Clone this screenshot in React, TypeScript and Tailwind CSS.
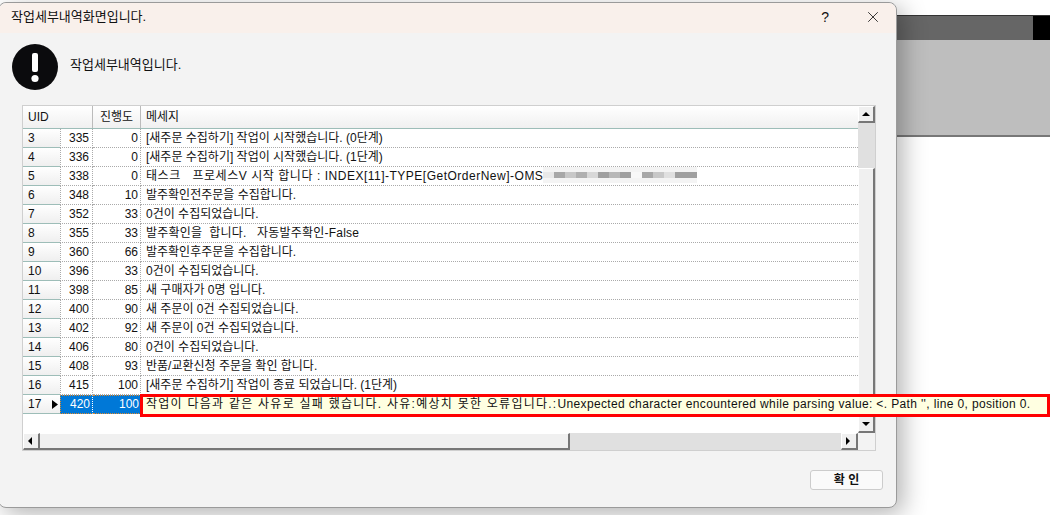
import React from 'react';
import { X } from 'lucide-react';

const rows = [
  ['3', '335', '0', '[새주문 수집하기] 작업이 시작했습니다. (0단계)'],
  ['4', '336', '0', '[새주문 수집하기] 작업이 시작했습니다. (1단계)'],
  ['5', '338', '0', '태스크   프로세스V 시작 합니다 : '],
  ['6', '348', '10', '발주확인전주문을 수집합니다.'],
  ['7', '352', '33', '0건이 수집되었습니다.'],
  ['8', '355', '33', '발주확인을  합니다.   자동발주확인-False'],
  ['9', '360', '66', '발주확인후주문을 수집합니다.'],
  ['10', '396', '33', '0건이 수집되었습니다.'],
  ['11', '398', '85', '새 구매자가 0명 입니다.'],
  ['12', '400', '90', '새 주문이 0건 수집되었습니다.'],
  ['13', '402', '92', '새 주문이 0건 수집되었습니다.'],
  ['14', '406', '80', '0건이 수집되었습니다.'],
  ['15', '408', '93', '반품/교환신청 주문을 확인 합니다.'],
  ['16', '415', '100', '[새주문 수집하기] 작업이 종료 되었습니다. (1단계)'],
];

const blur = ['#e8e8e8', '#a8a8a8', '#c8c8c8', '#b0b0b0', '#d8d8d8', '#a0a0a0', '#b8b8b8', '#a0a0a0', '#f8f8f8', '#a8a8a8', '#c8c8c8', '#e0e0e0', '#a0a0a0', '#a0a0a0'];

const ScrollBtn = ({ dir }: { dir: 'up' | 'down' | 'left' | 'right' }) => {
  const points = { up: '1,6 5,2 9,6', down: '1,2 5,6 9,2', left: '6,0 2,4 6,8', right: '2,0 6,4 2,8' }[dir];
  return (
    <div className="w-[17px] h-[17px] shrink-0 bg-[#f0f0f0] border-r-2 border-b-2 border-r-[#777] border-b-[#777] border-t border-l border-t-white border-l-white flex items-center justify-center">
      <svg width="10" height="8" viewBox="0 0 10 8"><polygon points={points} fill="#000" /></svg>
    </div>
  );
};

export default function App() {
  return (
    <div className="relative w-[1050px] h-[515px] overflow-hidden bg-white" style={{ fontFamily: '"Liberation Sans", "Noto Sans CJK KR", sans-serif' }}>
      {/* app behind the dialog */}
      <div className="pt-[15px]">
        <div className="h-[25px] flex justify-end bg-[#666] border-t border-[#333]">
          <div className="w-[17px] bg-black" />
        </div>
        <div className="h-[97px] bg-[#bebebe] border-b-2 border-[#777]" />
      </div>

      {/* dialog */}
      <div className="absolute left-[-2px] top-[2px] w-[899px] h-[506px] rounded-lg bg-[#f3f3f3] border border-[#9a9a9a] flex flex-col shadow-[6px_6px_24px_rgba(0,0,0,0.3)]">
        <div className="h-[30px] shrink-0 rounded-t-lg bg-[#f9f0eb] flex items-center pl-[12px] pb-[2px] text-[13px] text-[#111]">
          <span>작업세부내역화면입니다.</span>
          <span className="ml-auto mr-[35px] text-[14px]">?</span>
          <X size={18} strokeWidth={1.1} className="mr-[14px]" />
        </div>

        <div className="flex items-center h-[67px] shrink-0 pl-[13px] gap-[12px] text-[13px] text-[#111]">
          <svg width="46" height="46" viewBox="0 0 46 46">
            <circle cx="23" cy="23" r="23" fill="#0b0b0d" />
            <rect x="20" y="9" width="6" height="19" rx="2" fill="#fff" />
            <circle cx="23" cy="34.5" r="3.6" fill="#fff" />
          </svg>
          <span className="-mt-[3px]">작업세부내역입니다.</span>
        </div>

        {/* grid */}
        <div className="relative ml-[23px] mt-[5px] w-[854px] h-[346px] shrink-0 bg-white border border-[#cfcfcf] flex flex-col text-[12px] text-[#111]">
          <div className="flex flex-1 min-h-0">
            <div className="flex-1 min-w-0 flex flex-col">
              <div className="flex h-[23px] shrink-0 bg-gradient-to-b from-white to-[#f0f0f0] border-b border-[#9dbdb8]">
                <div className="w-[70px] pl-[5px] leading-[22px] border-r border-[#bbb]">UID</div>
                <div className="w-[48px] text-center leading-[22px] border-r border-[#bbb]">진행도</div>
                <div className="flex-1 pl-[5px] leading-[22px]">메세지</div>
              </div>
              {rows.map((r) => (
                <div key={r[0]} className="flex h-[19px] shrink-0 leading-[18px]">
                  <div className="w-[37px] pl-[5px] bg-gradient-to-b from-white to-[#efefef] border-b border-[#9dbdb8]">{r[0]}</div>
                  <div className="w-[33px] pr-[3px] text-right border-b border-l border-r border-dotted border-[#aaa]">{r[1]}</div>
                  <div className="w-[48px] pr-[2px] text-right border-b border-r border-dotted border-[#aaa]">{r[2]}</div>
                  <div className="flex-1 pl-[5px] border-b border-dotted border-[#aaa] flex whitespace-pre">
                    <span className={r[0] === '5' ? 'tracking-[0.55px]' : r[0] === '8' ? 'tracking-[0.2px]' : ''}>{r[3]}</span>
                    {r[0] === '5' && (
                      <>
                        <span className="tracking-[0.5px]">INDEX[11]-TYPE[GetOrderNew]-OMS</span>
                        <span className="flex items-center h-[16px] bg-[#f4f4f4]">
                          {blur.map((c, i) => (
                            <span key={i} className="w-[11px] h-[6px]" style={{ backgroundColor: c }} />
                          ))}
                        </span>
                      </>
                    )}
                  </div>
                </div>
              ))}
              <div className="flex h-[19px] shrink-0 leading-[17px]">
                <div className="w-[37px] pl-[5px] bg-gradient-to-b from-white to-[#efefef] border-b border-[#9dbdb8] flex items-center justify-between pr-[2px]">
                  <span>17</span>
                  <svg width="6" height="9" viewBox="0 0 6 9"><polygon points="0,0 6,4.5 0,9" fill="#000" /></svg>
                </div>
                <div className="w-[33px] pr-[2px] text-right bg-[#0078d7] text-white border-y border-l border-r border-dotted border-y-[#e08a2c] border-l-[#e08a2c] border-r-white">420</div>
                <div className="w-[48px] pr-[2px] text-right bg-[#0078d7] text-white border-y border-dotted border-[#e08a2c]">100</div>
              </div>
            </div>
            <div className="w-[17px] shrink-0 flex flex-col bg-[#e0e0e0]">
              <ScrollBtn dir="up" />
              <div className="h-[45px] shrink-0" />
              <div className="flex-1 bg-[#f0f0f0] border-l border-t border-l-white border-t-white border-r-2 border-r-[#777]" />
              <ScrollBtn dir="down" />
            </div>
          </div>
          <div className="flex h-[17px] shrink-0">
            <ScrollBtn dir="left" />
            <div className="w-[530px] shrink-0 bg-[#f0f0f0] border-t border-t-white border-r-2 border-b-2 border-r-[#777] border-b-[#777]" />
            <div className="flex-1 bg-[#e0e0e0]" />
            <ScrollBtn dir="right" />
            <div className="w-[17px] bg-[#f3f3f3]" />
          </div>

          {/* cell tip over the row, runs past the dialog */}
          <div className="absolute left-[117px] top-[288px] w-[910px] h-[23px] bg-[#ffffe1] border-[3px] border-[#f00] pl-[3px] leading-[15px] whitespace-nowrap">
            <span className="tracking-[1.25px]">작업이 다음과 같은 사유로 실패 했습니다. 사유:예상치 못한 오류입니다.:</span>
            <span className="tracking-[0.36px]">Unexpected character encountered while parsing value: &lt;. Path '', line 0, position 0.</span>
          </div>
        </div>

        <div className="flex justify-end pr-[13px] mt-[19px]">
          <button className="w-[73px] h-[20px] rounded-[3px] bg-[#fafafa] border border-[#ccc] text-[12px] font-bold leading-[18px] text-[#111]">확 인</button>
        </div>
      </div>
    </div>
  );
}
